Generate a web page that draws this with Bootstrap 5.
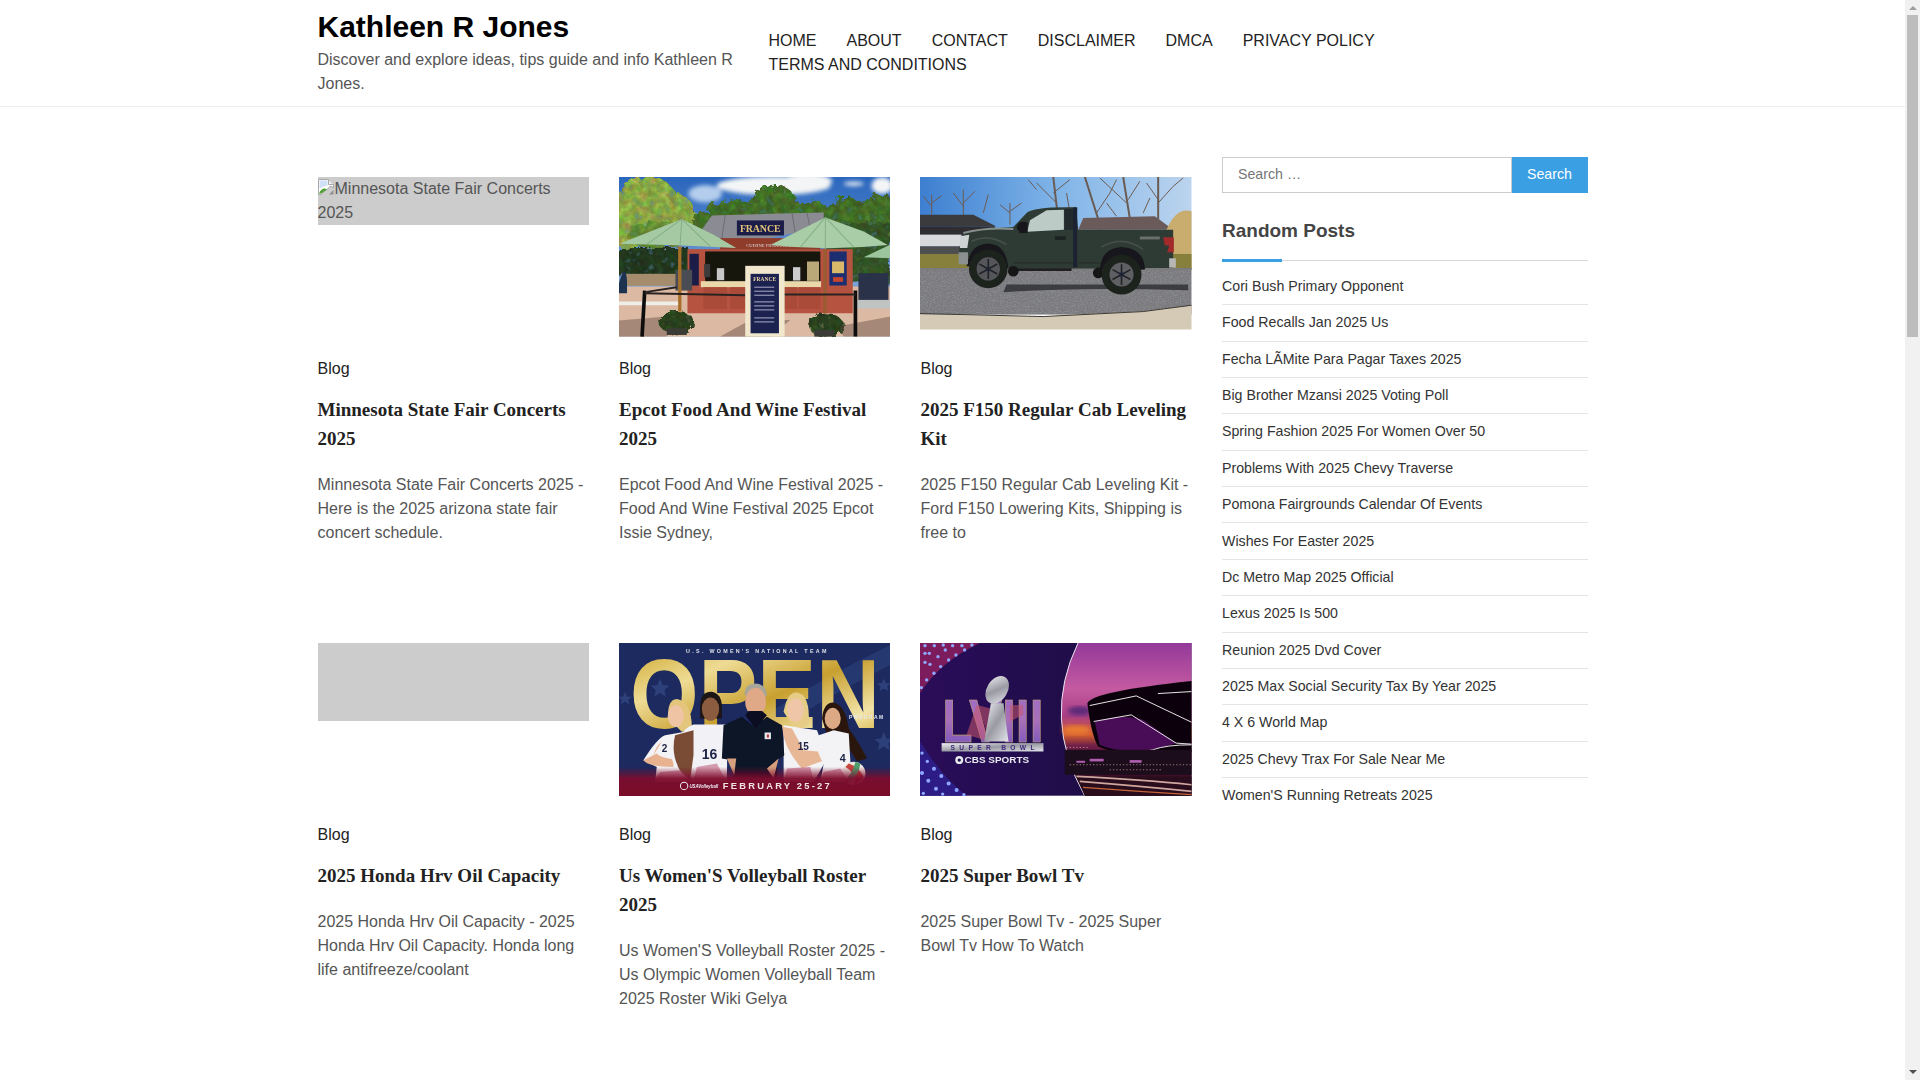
<!DOCTYPE html>
<html lang="en">
<head>
<meta charset="utf-8">
<title>Kathleen R Jones</title>
<link href="https://cdn.jsdelivr.net/npm/bootstrap@5.3.0/dist/css/bootstrap.min.css" rel="stylesheet">
<style>
body{font-family:"Liberation Sans",Arial,sans-serif;font-size:16px;line-height:24px;color:#555;background:#fff;padding-right:15px}
a{color:inherit;text-decoration:none}
.site-wrap{max-width:1300px;padding-left:15px;padding-right:15px}
.site-wrap>.row{--bs-gutter-x:30px}
.site-head{height:107px;border-bottom:1px solid #eee}
.brand-col{flex:0 0 451px;width:451px;padding-top:8px}
.brand-name{font-size:30px;line-height:38.4px;font-weight:700;color:#000;margin:0 0 1.6px}
.brand-sub{margin:0;color:#555}
.menu-col{flex:1 1 0;margin-top:-1px}
.menu-list{column-gap:30px;color:#222}
.main-col{flex:0 0 904.5px;width:904.5px;padding-top:70px}
.side-col{flex:0 0 395.5px;width:395.5px;padding-top:50px}
.post-grid{--bs-gutter-x:30px}
.post-item{padding-bottom:98.5px}
.thumb-box{height:160px;margin-bottom:19.5px;overflow:hidden}
.thumb-box svg{display:block;width:100%}
.thumb-missing{background:#ccc;color:#555;overflow:hidden}
.thumb-missing svg{display:inline-block;width:16px;height:16px;vertical-align:-1px;margin-right:1px}
.thumb-tall{height:78px}
.post-cat{color:#222}
.post-title{font-family:"Liberation Serif","Times New Roman",serif;font-weight:700;font-size:19px;line-height:28.5px;color:#222;margin:15.5px 0 19.7px}
.post-text{margin:0;color:#555}
.find-box input{flex:1 1 0;min-width:0;height:36px;border:1px solid #ccc;border-width:1.5px;border-radius:0;padding:0 15px;font-size:14.2px;color:#555;outline:0;line-height:34px;padding-bottom:2px}
.find-box input::placeholder{color:#757575;opacity:1}
.find-btn{flex:0 0 76px;height:36px;border:0;border-radius:0;background:#3a9fe3;color:#fff;font-size:14.2px;padding:0}
.side-title{font-size:19px;line-height:27px;font-weight:700;color:#444;margin:24px 0 0;padding-bottom:16px;border-bottom:1px solid #d8d8d8;position:relative}
.side-title::after{content:"";position:absolute;left:0;bottom:-2px;width:60px;height:3px;background:#3a9fe3}
.rand-list{margin-top:7.8px;font-size:14.2px;line-height:21px;color:#333}
.rand-list li{background:transparent;border:0;border-bottom:1px solid #e4e4e4;border-radius:0;padding:7.2px 0;color:#333}
.rand-list li:last-child{border-bottom:0}
.scroll-track{position:fixed;top:0;right:0;width:15px;height:100vh;background:#f1f1f1}
.scroll-thumb{position:absolute;left:2px;right:2px;top:15px;height:322px;background:#bdbdbd}
.scroll-up,.scroll-down{position:absolute;left:3.5px;width:0;height:0;border-left:4px solid transparent;border-right:4px solid transparent}
.scroll-up{top:6px;border-bottom:4px solid #9f9f9f}
.scroll-down{bottom:6px;border-top:4px solid #505050}
</style>
</head>
<body>
<header class="site-head">
  <div class="container site-wrap h-100">
    <div class="row h-100 align-items-center">
      <div class="brand-col align-self-start">
        <h1 class="brand-name">Kathleen R Jones</h1>
        <p class="brand-sub">Discover and explore ideas, tips guide and info Kathleen R Jones.</p>
      </div>
      <nav class="menu-col">
        <div class="d-flex flex-wrap menu-list">
          <a href="#">HOME</a><a href="#">ABOUT</a><a href="#">CONTACT</a><a href="#">DISCLAIMER</a><a href="#">DMCA</a><a href="#">PRIVACY POLICY</a><a href="#">TERMS AND CONDITIONS</a>
        </div>
      </nav>
    </div>
  </div>
</header>
<div class="container site-wrap">
  <div class="row">
    <main class="main-col">
      <div class="row post-grid row-cols-3">

        <article class="col post-item">
          <div class="thumb-box"><div class="thumb-missing"><svg viewBox="0 0 16 16"><path d="M.5.5h10l5 5v3l-3-1.500-3 3-3 2-3 3.500H.5z" fill="#fff" stroke="#a8a8a8"/><path d="M1.500 1.500h8v5l-4 1-4 2z" fill="#cfe0f7"/><path d="M1 14.500c1-3 3-5 6-5l2 1-3 2-2.500 2z" fill="#4f9f32"/><path d="M10.500.5v5h5" fill="#eee" stroke="#a8a8a8"/><path d="M11 15.500l4.500-4.500v4.500z" fill="#8f8f8f"/></svg>Minnesota State Fair Concerts 2025</div></div>
          <a class="post-cat" href="#">Blog</a>
          <h2 class="post-title">Minnesota State Fair Concerts 2025</h2>
          <p class="post-text">Minnesota State Fair Concerts 2025 - Here is the 2025 arizona state fair concert schedule.</p>
        </article>

        <article class="col post-item">
          <div class="thumb-box">
            <svg viewBox="27 22 813 478" role="img" aria-label="Epcot food kiosk">
              <defs>
                <linearGradient id="fSky" x1="0" y1="0" x2="0" y2="1"><stop offset="0" stop-color="#2a66bd"/><stop offset="1" stop-color="#9dbde4"/></linearGradient>
                <filter id="soft"><feGaussianBlur stdDeviation="1.8"/></filter>
                <filter id="softer"><feGaussianBlur stdDeviation="7"/></filter>
                <filter id="leaf" x="-10%" y="-10%" width="120%" height="120%"><feTurbulence type="fractalNoise" baseFrequency=".045" numOctaves="3" seed="4" result="n"/><feDisplacementMap in="SourceGraphic" in2="n" scale="34" result="d"/><feComposite in="d" in2="n" operator="arithmetic" k1="1.6" k2=".35" k3="0" k4="0"/></filter>
              </defs>
              <g filter="url(#soft)">
                <rect x="27" y="22" width="813" height="478" fill="url(#fSky)"/>
                <g fill="#f4f5f6" filter="url(#softer)"><ellipse cx="490" cy="48" rx="170" ry="28"/><ellipse cx="590" cy="35" rx="75" ry="24"/><ellipse cx="815" cy="48" rx="32" ry="25"/><ellipse cx="730" cy="42" rx="30" ry="6"/><ellipse cx="285" cy="72" rx="50" ry="26" fill="#b4cdec"/></g>
                <g filter="url(#leaf)">
                  <g fill="#4c7a2c"><ellipse cx="490" cy="105" rx="70" ry="60"/><ellipse cx="370" cy="130" rx="80" ry="40"/><ellipse cx="600" cy="130" rx="60" ry="34"/><ellipse cx="705" cy="140" rx="75" ry="55"/><ellipse cx="810" cy="150" rx="70" ry="75"/><ellipse cx="290" cy="155" rx="60" ry="30"/></g>
                  <rect x="640" y="160" width="200" height="175" fill="#3a5f2c"/>
                  <g fill="#9dbd4c"><ellipse cx="110" cy="100" rx="95" ry="78"/><ellipse cx="185" cy="130" rx="70" ry="60"/><ellipse cx="55" cy="170" rx="50" ry="70"/></g>
                  <ellipse cx="140" cy="195" rx="90" ry="40" fill="#6f9a3a"/>
                  <rect x="27" y="235" width="210" height="82" fill="#263f22"/>
                </g>
                <rect x="48" y="312" width="150" height="36" fill="#a48c6d"/>
                <rect x="27" y="350" width="813" height="150" fill="#dcb9a2"/>
                <rect x="27" y="395" width="180" height="11" fill="#efefe9"/><rect x="740" y="390" width="100" height="26" fill="#bfc3c2"/>
                <path d="M27 500V452l180-15 40 10-80 53zM330 500l90-50h120l-60 50zM680 470l160-30v60H700z" fill="#8d7465" opacity=".7"/>
                <path d="M275 180 305 137 640 128V172L480 205 330 210z" fill="#8b8c93"/>
                <g stroke="#6d6e75" stroke-width="3"><path d="M345 136 335 205M545 130 555 190M590 129 600 180"/></g>
                <rect x="380" y="152" width="141" height="45" fill="#1b1f48"/>
                <text x="389" y="188" font-family="Liberation Serif" font-size="30" font-weight="700" fill="#e3c27c" textLength="122">FRANCE</text>
                <rect x="232" y="238" width="495" height="192" fill="#b5533f"/>
                <rect x="330" y="205" width="300" height="34" fill="#8f3c2c"/>
                <text x="408" y="232" font-size="14" fill="#ddd" font-family="Liberation Serif">CUISINE FRANCAISE</text>
                <rect x="285" y="245" width="345" height="92" fill="#15130f"/>
                <rect x="282" y="282" width="18" height="40" fill="#3a3a3a"/><rect x="320" y="295" width="22" height="36" fill="#c8c8c8"/><rect x="548" y="292" width="22" height="40" fill="#ccc"/><rect x="590" y="275" width="36" height="58" fill="#b9a878"/>
                <rect x="272" y="334" width="360" height="18" fill="#ead8aa"/>
                <path d="M280 352v65h70v-65zM360 352v65h45v-65zM520 352v65h40v-65zM565 352v65h65v-65z" fill="#a94b38"/>
                <rect x="238" y="252" width="28" height="95" fill="#1b1f48"/>
                <rect x="657" y="245" width="52" height="102" fill="#1f2f70"/><rect x="665" y="275" width="36" height="35" fill="#d9b86a"/><rect x="668" y="322" width="30" height="14" fill="#c6452f"/>
                <rect x="196" y="300" width="50" height="62" fill="#4a4e52"/>
                <path d="M27 340c12-45 22-45 24-5v35H27z" fill="#1f3350"/>
                <rect x="204" y="230" width="10" height="195" fill="#a7702a"/><rect x="639" y="236" width="10" height="195" fill="#9a5b32"/>
                <path d="M215 148 28 222Q200 225 378 235L310 195Z" fill="#a5c9a3"/>
                <path d="M215 148 110 224M215 148 210 226M215 148 300 230" stroke="#84ae87" stroke-width="3" fill="none"/>
                <path d="M645 143 480 226Q650 245 832 226L760 185Z" fill="#a9cda6"/>
                <path d="M645 143 570 232M645 143 645 238M645 143 730 232" stroke="#86b088" stroke-width="3" fill="none"/>
                <path d="M840 224 760 262 840 265Z" fill="#9cc49d"/>
                <g stroke="#111" stroke-width="11" fill="none"><path d="M104 362 96 500M735 362V500"/></g>
                <path d="M104 370 405 376M520 374H735M110 366 200 352" stroke="#2a2420" stroke-width="6" fill="none"/>
                <rect x="744" y="310" width="90" height="80" fill="#2a3148"/>
                <rect x="405" y="288" width="118" height="212" fill="#f0e7cd"/>
                <rect x="421" y="312" width="85" height="178" fill="#1c2050"/>
                <text x="429" y="333" font-family="Liberation Serif" font-size="16" font-weight="700" fill="#eed9a7" textLength="68">FRANCE</text>
                <g stroke="#c9cbe0" stroke-width="2.5"><path d="M432 352h60M432 364h60M432 376h60M432 396h60M432 408h60M432 420h60M432 444h60M432 456h60"/></g>
                <g fill="#2d4a22" filter="url(#leaf)"><ellipse cx="200" cy="458" rx="52" ry="35"/><ellipse cx="646" cy="465" rx="52" ry="35"/></g>
                <rect x="170" y="475" width="60" height="20" fill="#3b3b35"/><rect x="612" y="480" width="60" height="20" fill="#3b3b35"/>
              </g>
            </svg>
          </div>
          <a class="post-cat" href="#">Blog</a>
          <h2 class="post-title">Epcot Food And Wine Festival 2025</h2>
          <p class="post-text">Epcot Food And Wine Festival 2025 - Food And Wine Festival 2025 Epcot Issie Sydney,</p>
        </article>

        <article class="col post-item">
          <div class="thumb-box">
            <svg viewBox="30 22 815 458" role="img" aria-label="Green pickup truck">
              <defs>
                <linearGradient id="tSky" x1="0" y1="0" x2="1" y2="0"><stop offset="0" stop-color="#3d7fd0"/><stop offset=".5" stop-color="#7fb4e8"/><stop offset="1" stop-color="#bcd4ee"/></linearGradient>
                <filter id="soft2"><feGaussianBlur stdDeviation="1.4"/></filter>
                <filter id="grit" x="0" y="0" width="100%" height="100%"><feTurbulence type="fractalNoise" baseFrequency=".2 .4" numOctaves="2" seed="7" result="n"/><feComposite in="SourceGraphic" in2="n" operator="arithmetic" k1=".35" k2=".8" k3="0" k4="0"/></filter>
              </defs>
              <g filter="url(#soft2)">
                <rect x="30" y="22" width="815" height="280" fill="url(#tSky)"/>
                <g stroke="#6b5b52" fill="none" stroke-width="3">
                  <path d="M65 135V75M65 110 40 80M65 100 95 78M160 150V60M160 110 130 70M160 100 195 65M220 130 235 75M300 165V100M300 130 270 105M300 125 335 100"/>
                  <path stroke-width="6" d="M445 150 430 22M575 180 525 22M665 178 640 22M745 170V22"/>
                  <path d="M440 100 380 40M430 70 480 30M560 130 600 70M650 100 570 25M655 90 690 35M745 90 710 40M745 100 790 50M480 130 470 70M700 130 720 85M620 140 590 100M380 60 355 30M600 70 620 30M790 50 820 25"/>
                </g>
                <path d="M30 135H190L258 170H30z" fill="#3a3a3e"/>
                <rect x="30" y="170" width="225" height="26" fill="#2d2d31"/>
                <rect x="30" y="195" width="125" height="36" fill="#d7d9da"/><rect x="30" y="230" width="125" height="24" fill="#4e4f50"/>
                <path d="M505 180 520 145 735 140 790 180z" fill="#6a5a5a"/>
                <path d="M770 180Q800 110 845 125V300H790z" fill="#c9ad6e"/>
                <rect x="30" y="253" width="815" height="48" fill="#87803d"/>
                <rect x="30" y="295" width="815" height="140" fill="#808084" filter="url(#grit)"/>
                <path d="M290 345H835V362Q500 352 280 368z" fill="#3b3c40"/>
                <path d="M30 435 400 440 700 425 845 408V480H30z" fill="#d4cab5"/>
                <path d="M30 432 400 441 700 426 845 407" stroke="#3e3a34" stroke-width="3" fill="none"/>
                <path d="M170 290Q180 218 235 218 295 220 300 296ZM570 296Q575 228 635 228 700 230 708 296Z" fill="#15181a"/>
                <rect x="565" y="280" width="140" height="20" fill="#15181a"/>
                <path d="M155 195Q175 180 310 172L350 130Q370 113 470 113H498L505 180H790L790 295H705Q700 235 635 232 575 235 570 297H295Q290 225 235 222 180 225 170 285L148 275V240Z" fill="#2f3a34"/>
                <path d="M185 215Q235 190 290 225M575 232Q640 195 700 240" fill="none" stroke="#454f49" stroke-width="5"/>
                <path d="M352 186 360 152 410 122 462 120V180Z" fill="#bccbc6"/>
                <path d="M464 118H490L495 180H464Z" fill="#222a2e"/>
                <rect x="490" y="113" width="12" height="180" fill="#1a2330"/>
                <path d="M160 190Q230 172 310 178" stroke="#87908d" stroke-width="6" fill="none"/>
                <path d="M328 185a15 12 0 0 1 25-25v30h-25z" fill="#15181a"/>
                <rect x="435" y="200" width="32" height="11" fill="#1c2220"/>
                <path d="M310 280H490M505 280H570" stroke="#222a25" stroke-width="3"/>
                <path d="M690 205H750" stroke="#6b6f6d" stroke-width="9"/>
                <path d="M760 203H792V248H772L778 228H765z" fill="#a32c2c"/>
                <path d="M150 200 178 195 172 235H150z" fill="#cdd2d3"/>
                <rect x="146" y="248" width="28" height="36" fill="#8c9090"/>
                <rect x="778" y="266" width="20" height="28" fill="#b7b7b4"/>
                <rect x="320" y="296" width="165" height="8" fill="#1b1b1b"/>
                <circle cx="310" cy="305" r="16" fill="#141414"/><circle cx="565" cy="310" r="16" fill="#141414"/>
                <circle cx="235" cy="298" r="58" fill="#1f201f"/><circle cx="235" cy="298" r="35" fill="#55575a"/><circle cx="235" cy="298" r="8" fill="#2c4b9c"/>
                <circle cx="635" cy="315" r="60" fill="#1f201f"/><circle cx="635" cy="315" r="36" fill="#5e6063"/><circle cx="635" cy="315" r="8" fill="#2c4b9c"/>
                <g stroke="#232425" stroke-width="5"><path d="M235 268V328M208 283 262 313M208 313 262 283M635 284V346M608 300 662 330M608 330 662 300"/></g>
              </g>
            </svg>
          </div>
          <a class="post-cat" href="#">Blog</a>
          <h2 class="post-title">2025 F150 Regular Cab Leveling Kit</h2>
          <p class="post-text">2025 F150 Regular Cab Leveling Kit - Ford F150 Lowering Kits, Shipping is free to</p>
        </article>

        <article class="col post-item">
          <div class="thumb-box"><div class="thumb-missing thumb-tall"></div></div>
          <a class="post-cat" href="#">Blog</a>
          <h2 class="post-title">2025 Honda Hrv Oil Capacity</h2>
          <p class="post-text">2025 Honda Hrv Oil Capacity - 2025 Honda Hrv Oil Capacity. Honda long life antifreeze/coolant</p>
        </article>

        <article class="col post-item">
          <div class="thumb-box">
            <svg viewBox="27 24 813 459" role="img" aria-label="Volleyball open program banner">
              <defs>
                <linearGradient id="gold" x1="0" y1="0" x2="1" y2="1"><stop offset="0" stop-color="#c9a01f"/><stop offset=".3" stop-color="#eedb94"/><stop offset=".55" stop-color="#c8a030"/><stop offset=".8" stop-color="#f2e4a8"/><stop offset="1" stop-color="#cc9c1c"/></linearGradient>
                <linearGradient id="mar" x1="0" y1="0" x2="0" y2="1"><stop offset="0" stop-color="#7b0c2a" stop-opacity="0"/><stop offset=".4" stop-color="#7d0c2e" stop-opacity=".95"/><stop offset="1" stop-color="#7a0b28"/></linearGradient>
                <filter id="soft3"><feGaussianBlur stdDeviation="1"/></filter>
              </defs>
              <g filter="url(#soft3)">
                <rect x="27" y="24" width="813" height="459" fill="#1b2a5e"/>
                <path d="M480 230Q650 120 840 30V90Q680 170 500 280z" fill="#26386f"/>
                <g fill="#2e4079"><path d="M150 130l8 20 20 2-15 13 5 20-18-11-18 11 5-20-15-13 20-2zM45 170l6 14 14 1-10 9 3 14-13-8-13 8 3-14-10-9 14-1zM820 290l8 20 20 2-15 13 5 20-18-11-18 11 5-20-15-13 20-2zM820 130l6 14 14 1-10 9 3 14-13-8-13 8 3-14-10-9 14-1z"/></g>
                <text x="228" y="53" font-family="Liberation Sans" font-size="16" font-weight="700" fill="#dfe2ea" textLength="420">U.S. WOMEN'S NATIONAL TEAM</text>
                <text x="60" y="280" font-family="Liberation Sans" font-size="296" font-weight="700" fill="url(#gold)" textLength="748" lengthAdjust="spacingAndGlyphs">OPEN</text>
                <text x="716" y="252" font-family="Liberation Sans" font-size="15" font-weight="700" fill="#e6e8ee" textLength="102">PROGRAM</text>
                <path d="M175 250Q170 195 200 192 245 200 245 278L215 290z" fill="#e3c67c"/>
                <path d="M100 375Q140 310 165 300L250 285 250 440H135L140 395z" fill="#f3f2f5"/>
                <path d="M100 375Q115 395 190 395V372Q150 368 140 355zM155 320Q140 330 130 360" fill="#e8b18f"/>
                <ellipse cx="197" cy="243" rx="24" ry="33" fill="#efc4a4"/>
                <text x="155" y="350" font-size="30" font-weight="700" font-family="Liberation Sans" fill="#1c2145">2</text>
                <path d="M250 268Q195 290 185 370 200 420 240 440L350 440 352 268z" fill="#f2f1f5"/>
                <path d="M195 300Q180 360 215 415L240 435 250 360 250 285z" fill="#7a4b35"/>
                <path d="M270 215Q270 170 303 170 335 175 335 215V250H270z" fill="#1a1512"/>
                <ellipse cx="301" cy="222" rx="26" ry="35" fill="#8c5b40"/>
                <text x="275" y="372" font-size="42" font-weight="700" font-family="Liberation Sans" fill="#1c2145">16</text>
                <path d="M520 270 620 285 650 370 610 440H520z" fill="#f3f2f5"/>
                <path d="M515 275Q520 340 575 400L650 372 630 350 580 345 545 280z" fill="#e8b796"/>
                <path d="M520 230Q530 170 560 172 600 178 595 265L575 280 545 270z" fill="#e6cc86"/>
                <ellipse cx="556" cy="225" rx="25" ry="35" fill="#f0c6a8"/>
                <text x="562" y="345" font-size="30" font-weight="700" font-family="Liberation Sans" fill="#1c2145">15</text>
                <path d="M635 250Q640 200 670 202 705 210 715 280 745 320 770 370L740 378 690 300H650z" fill="#2a1810"/>
                <path d="M625 300Q610 340 640 385L630 440H715L720 380 715 295 670 285z" fill="#f3f2f5"/>
                <ellipse cx="667" cy="250" rx="24" ry="32" fill="#dba983"/>
                <text x="688" y="380" font-size="32" font-weight="700" font-family="Liberation Sans" fill="#1c2145">4</text>
                <circle cx="730" cy="415" r="35" fill="#efe9e2"/><path d="M705 395Q735 410 735 450L760 425Q745 395 715 385z" fill="#c8453d"/><path d="M735 380Q725 420 700 438L712 445Q745 425 750 385z" fill="#4f9e6c"/>
                <path d="M395 245 340 270 335 370 365 375 370 450H500L500 375 522 360 515 270 470 245 432 275z" fill="#0f1428"/>
                <path d="M350 370 372 420 378 370zM505 370 490 430 470 400z" fill="#d69f7e"/>
                <path d="M403 175Q405 145 435 145 468 147 470 180L462 190H410z" fill="#a8a69a"/>
                <ellipse cx="436" cy="200" rx="31" ry="42" fill="#dfa886"/>
                <path d="M405 240 436 280 470 240 455 228H415z" fill="#0b1020"/>
                <rect x="463" y="292" width="19" height="20" fill="#e6e6ea"/><rect x="470" y="298" width="6" height="9" fill="#b52f3a"/>
                <path d="M130 440H250L210 405 150 410zM250 440 350 440 320 385 260 395zM520 440H610L600 395 530 400zM630 440H715L690 400 640 410z" fill="#c67690" opacity=".7"/>
                <rect x="27" y="395" width="813" height="88" fill="url(#mar)"/>
                <circle cx="222" cy="452" r="11" fill="none" stroke="#eee" stroke-width="3"/>
                <text x="238" y="459" font-family="Liberation Sans" font-size="17" font-weight="700" font-style="italic" fill="#e8e8ee" textLength="86" lengthAdjust="spacingAndGlyphs">USAVolleyball</text>
                <text x="338" y="462" font-family="Liberation Sans" font-size="28" font-weight="700" fill="#efe3dd" textLength="320">FEBRUARY 25-27</text>
              </g>
            </svg>
          </div>
          <a class="post-cat" href="#">Blog</a>
          <h2 class="post-title">Us Women'S Volleyball Roster 2025</h2>
          <p class="post-text">Us Women'S Volleyball Roster 2025 - Us Olympic Women Volleyball Team 2025 Roster Wiki Gelya</p>
        </article>

        <article class="col post-item">
          <div class="thumb-box">
            <svg viewBox="30 24 816 459" role="img" aria-label="Super Bowl on CBS Sports">
              <defs>
                <linearGradient id="pBg" x1="0" y1="0" x2="1" y2="0"><stop offset="0" stop-color="#2a1158"/><stop offset="1" stop-color="#180a40"/></linearGradient>
                <linearGradient id="sbSky" x1="0" y1="0" x2="0" y2="1"><stop offset="0" stop-color="#93399a"/><stop offset=".3" stop-color="#c45aa0"/><stop offset=".48" stop-color="#a83e84"/><stop offset=".6" stop-color="#d6602e"/><stop offset=".67" stop-color="#702048"/><stop offset="1" stop-color="#170510"/></linearGradient>
                <linearGradient id="lv" x1="0" y1="0" x2="0" y2="1"><stop offset="0" stop-color="#9a6cc8"/><stop offset=".5" stop-color="#a86fb8"/><stop offset="1" stop-color="#6a4fc0"/></linearGradient>
                <linearGradient id="silver" x1="0" y1="0" x2="1" y2="1"><stop offset="0" stop-color="#f0f0f2"/><stop offset=".5" stop-color="#9a9aa4"/><stop offset="1" stop-color="#e4e4ea"/></linearGradient>
                <filter id="soft4"><feGaussianBlur stdDeviation=".8"/></filter>
                <filter id="soft5"><feGaussianBlur stdDeviation="6"/></filter>
              </defs>
              <g filter="url(#soft4)">
                <rect x="30" y="24" width="816" height="459" fill="url(#pBg)"/>
                <path d="M30 24H210Q90 80 30 175z" fill="#7c1f5c"/>
                <path d="M30 320Q90 420 170 483H30z" fill="#2d1f86"/>
                <g fill="#8fa8ff">
                  <circle cx="45" cy="32" r="5"/><circle cx="73" cy="32" r="5"/><circle cx="100" cy="30" r="5"/><circle cx="128" cy="32" r="5"/><circle cx="156" cy="32" r="5"/><circle cx="186" cy="30" r="5"/>
                  <circle cx="45" cy="55" r="5"/><circle cx="58" cy="55" r="5"/><circle cx="84" cy="65" r="5"/><circle cx="106" cy="45" r="5"/><circle cx="138" cy="60" r="5"/><circle cx="164" cy="45" r="5"/>
                  <circle cx="45" cy="82" r="5"/><circle cx="60" cy="88" r="5"/><circle cx="92" cy="95" r="5"/><circle cx="116" cy="75" r="5"/>
                  <circle cx="50" cy="135" r="5"/><circle cx="72" cy="115" r="5"/><circle cx="34" cy="158" r="5"/>
                  <circle cx="36" cy="355" r="5"/><circle cx="52" cy="380" r="5"/><circle cx="72" cy="402" r="6"/><circle cx="36" cy="415" r="6"/><circle cx="94" cy="424" r="6"/><circle cx="55" cy="438" r="6"/><circle cx="116" cy="446" r="6"/><circle cx="78" cy="462" r="6"/><circle cx="140" cy="466" r="6"/><circle cx="40" cy="476" r="5"/><circle cx="98" cy="478" r="5"/><circle cx="162" cy="480" r="5"/>
                </g>
                <path d="M505 24Q395 250 525 483H846V24Z" fill="url(#sbSky)"/>
                <path d="M505 24Q395 250 525 483" fill="none" stroke="#e8e4ef" stroke-width="3"/>
                <ellipse cx="510" cy="228" rx="36" ry="14" fill="#5d2c78" filter="url(#soft5)"/>
                <ellipse cx="500" cy="285" rx="42" ry="14" fill="#e87a30" filter="url(#soft5)"/>
                <path d="M533 205Q545 170 846 138V352H730Q620 362 565 335 545 300 533 205Z" fill="#0c060c"/>
                <path d="M555 260Q640 235 700 255L800 325 730 345Q620 355 570 330Z" fill="#4a0a58"/>
                <path d="M540 212 680 183 846 262M552 260 665 240 800 325 846 328M580 352Q660 360 730 345 770 330 846 330M745 176 846 170" fill="none" stroke="#e6e0e4" stroke-width="3"/>
                <rect x="465" y="345" width="381" height="75" fill="#1c0a1a"/>
                <g fill="#b05fb0"><rect x="540" y="372" width="42" height="8"/><rect x="660" y="376" width="36" height="8"/><rect x="500" y="378" width="26" height="6"/></g>
                <g stroke="#d1b5a8" stroke-width="2" stroke-dasharray="4 6"><path d="M470 338H540M480 390H846M600 405H760"/></g>
                <path d="M500 425H846V483H525z" fill="#2a0d1a"/>
                <path d="M500 425Q700 435 846 450M510 440Q700 455 846 470" stroke="#cfa7a0" stroke-width="5" fill="none"/>
                <path d="M520 458Q680 470 846 480" stroke="#c6663a" stroke-width="4" fill="none"/>
                <text x="97" y="322" font-family="Liberation Sans" font-size="185" font-weight="700" fill="url(#lv)" stroke="#c8a878" stroke-width="2" textLength="304" lengthAdjust="spacingAndGlyphs">LVIII</text>
                <path d="M200 210 240 320 170 300zM300 210H340V240L300 260zM240 220 200 210 235 300z" fill="#c8566e" opacity=".55"/>
                <path d="M223 320 243 205H281L296 320Z" fill="url(#silver)"/>
                <ellipse cx="262" cy="165" rx="31" ry="45" transform="rotate(32 262 165)" fill="url(#silver)"/>
                <rect x="95" y="325" width="306" height="25" fill="url(#silver)"/>
                <text x="122" y="345" font-family="Liberation Sans" font-size="20" font-weight="700" fill="#3f2a7a" textLength="252">SUPER BOWL</text>
                <circle cx="148" cy="376" r="12" fill="#e8e8f0"/><circle cx="148" cy="376" r="5" fill="#1a0c45"/>
                <text x="164" y="386" font-family="Liberation Sans" font-size="27" font-weight="700" fill="#e8e8f0" textLength="194" lengthAdjust="spacingAndGlyphs">CBS SPORTS</text>
              </g>
            </svg>
          </div>
          <a class="post-cat" href="#">Blog</a>
          <h2 class="post-title">2025 Super Bowl Tv</h2>
          <p class="post-text">2025 Super Bowl Tv - 2025 Super Bowl Tv How To Watch</p>
        </article>

      </div>
    </main>
    <aside class="side-col">
      <form class="d-flex find-box" onsubmit="return false">
        <input type="search" placeholder="Search …" aria-label="Search">
        <button class="btn find-btn" type="submit">Search</button>
      </form>
      <h3 class="side-title">Random Posts</h3>
      <ul class="list-group rand-list">
        <li class="list-group-item">Cori Bush Primary Opponent</li>
        <li class="list-group-item">Food Recalls Jan 2025 Us</li>
        <li class="list-group-item">Fecha LÃMite Para Pagar Taxes 2025</li>
        <li class="list-group-item">Big Brother Mzansi 2025 Voting Poll</li>
        <li class="list-group-item">Spring Fashion 2025 For Women Over 50</li>
        <li class="list-group-item">Problems With 2025 Chevy Traverse</li>
        <li class="list-group-item">Pomona Fairgrounds Calendar Of Events</li>
        <li class="list-group-item">Wishes For Easter 2025</li>
        <li class="list-group-item">Dc Metro Map 2025 Official</li>
        <li class="list-group-item">Lexus 2025 Is 500</li>
        <li class="list-group-item">Reunion 2025 Dvd Cover</li>
        <li class="list-group-item">2025 Max Social Security Tax By Year 2025</li>
        <li class="list-group-item">4 X 6 World Map</li>
        <li class="list-group-item">2025 Chevy Trax For Sale Near Me</li>
        <li class="list-group-item">Women'S Running Retreats 2025</li>
      </ul>
    </aside>
  </div>
</div>
<div class="scroll-track" aria-hidden="true"><div class="scroll-up"></div><div class="scroll-thumb"></div><div class="scroll-down"></div></div>
<script src="https://cdn.jsdelivr.net/npm/bootstrap@5.3.0/dist/js/bootstrap.bundle.min.js"></script>
</body>
</html>
